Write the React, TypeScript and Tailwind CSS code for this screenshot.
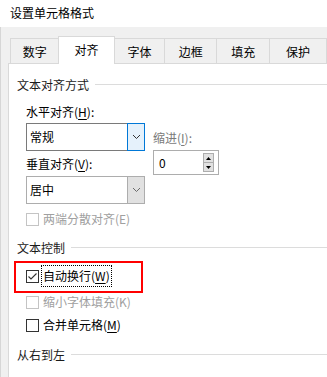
import React from "react";

const FONT = { fontFamily: '"Noto Sans CJK SC", "Noto Sans", sans-serif' };

function Mn({ c }: { c: string }) {
  return (
    <>
      (<span className="underline underline-offset-[2px] decoration-[1px]">{c}</span>)
    </>
  );
}

function Chevron({ color }: { color: string }) {
  return (
    <svg width="9" height="6" viewBox="0 0 9 6">
      <path d="M1 1 L4.5 4.5 L8 1" fill="none" stroke={color} strokeWidth="1" />
    </svg>
  );
}

function GroupHeader({ text }: { text: string }) {
  return (
    <div className="flex items-center h-[20px] pl-[8px] pr-0">
      <span className="leading-[20px] text-[12px] text-[#1a1a1a]">{text}</span>
      <div className="flex-1 h-px bg-[#dcdcdc] ml-[6px] -mt-[1px]" />
    </div>
  );
}

function Box({ checked, disabled }: { checked?: boolean; disabled?: boolean }) {
  return (
    <div
      className={
        "w-[13px] h-[13px] border bg-white flex items-center justify-center shrink-0 " +
        (disabled ? "border-[#c4c4c4]" : "border-[#333333]")
      }
    >
      {checked && (
        <svg width="11" height="11" viewBox="0 0 11 11">
          <path d="M1.5 5.5 L4 8 L9.5 2.5" fill="none" stroke="#333" strokeWidth="1.1" />
        </svg>
      )}
    </div>
  );
}

const tabs = [
  { t: "数字", w: "w-[51px]" },
  { t: "对齐", w: "w-[58px]", active: true },
  { t: "字体", w: "w-[53px]" },
  { t: "边框", w: "w-[55px]" },
  { t: "填充", w: "w-[55px]" },
  { t: "保护", w: "w-[60px]" },
];

export default function App() {
  return (
    <div
      className="relative w-[327px] h-[377px] overflow-hidden bg-[#f0f0f0] text-[12px] text-black flex flex-col"
      style={FONT}
    >
      {/* title bar */}
      <div className="h-[27px] shrink-0 bg-white flex items-center pl-[10px]">
        <span className="leading-[16px] -mt-[1px]">设置单元格格式</span>
      </div>

      <div className="flex-1 flex flex-col border-l border-[#d6d6d6]">
        {/* tabs */}
        <div className="relative z-10 mt-[9px] h-[28px] flex items-end pl-[9px] shrink-0">
          {tabs.map((tab, i) =>
            tab.active ? (
              <div
                key={tab.t}
                className={
                  tab.w +
                  " -ml-px relative z-10 h-[28px] bg-white border-t border-l border-r border-[#d9d9d9] flex items-center justify-center leading-[16px]"
                }
              >
                <span className="-mt-[1px]">{tab.t}</span>
              </div>
            ) : (
              <div
                key={tab.t}
                className={
                  tab.w +
                  (i === 0 ? "" : " -ml-px") +
                  " h-[26px] bg-[#f0f0f0] border border-[#d9d9d9] flex items-center justify-center leading-[16px]"
                }
              >
                <span className="mt-[1px]">{tab.t}</span>
              </div>
            )
          )}
        </div>

        {/* panel */}
        <div className="-mt-px ml-[7px] flex-1 bg-white border-l border-t border-[#d9d9d9] flex flex-col pt-[11px]">
          <GroupHeader text="文本对齐方式" />

          <div className="flex mt-[9px] pl-[17px]">
            <div className="flex flex-col w-[119px]">
              <div className="h-[16px] leading-[16px]">
                水平对齐<Mn c="H" />:
              </div>
              <div className="mt-[3px] h-[28px] flex border border-[#7a7a7a] bg-white">
                <div className="flex-1 flex items-center pl-[3px] leading-[16px]">常规</div>
                <div className="w-[18px] -my-px -mr-px border border-[#0078d7] bg-[#e5f1fb] flex items-center justify-center">
                  <Chevron color="#333333" />
                </div>
              </div>
              <div className="mt-[5px] h-[16px] leading-[16px]">
                垂直对齐<Mn c="V" />:
              </div>
              <div className="mt-[4px] h-[28px] flex border border-[#adadad] bg-white">
                <div className="flex-1 flex items-center pl-[3px] leading-[16px]">居中</div>
                <div className="w-[17px] border-l border-[#adadad] bg-[#e1e1e1] flex items-center justify-center">
                  <Chevron color="#6a6a6a" />
                </div>
              </div>
            </div>

            <div className="flex flex-col ml-[8px]">
              <div className="mt-[26px] h-[16px] leading-[16px] text-[#7a7a7a]">
                缩进<Mn c="I" />:
              </div>
              <div className="mt-[4px] w-[66px] h-[25px] border border-[#adadad] bg-white flex items-center">
                <span className="flex-1 pl-[5px] leading-[16px]">0</span>
                <div className="flex flex-col mr-[4px]">
                  <div className="w-[11px] h-[10px] bg-[#e1e1e1] border border-[#adadad] flex items-center justify-center">
                    <svg width="5" height="3" viewBox="0 0 5 3">
                      <path d="M0 3 L2.5 0 L5 3 Z" fill="#000" />
                    </svg>
                  </div>
                  <div className="w-[11px] h-[10px] -mt-px bg-[#e1e1e1] border border-[#adadad] flex items-center justify-center">
                    <svg width="5" height="3" viewBox="0 0 5 3">
                      <path d="M0 0 L2.5 3 L5 0 Z" fill="#000" />
                    </svg>
                  </div>
                </div>
              </div>
            </div>
          </div>

          <div className="mt-[7px] h-[16px] flex items-center pl-[17px] text-[#a0a0a0]">
            <Box disabled />
            <span className="ml-[4px] leading-[16px]">两端分散对齐(E)</span>
          </div>

          <div className="mt-[11px]">
            <GroupHeader text="文本控制" />
          </div>

          <div className="mt-[7px] h-[22px] flex items-center pl-[17px]">
            <Box checked />
            <span className="ml-[2px] h-[22px] px-[1px] border border-dotted border-black flex items-center leading-[16px]">
              自动换行<Mn c="W" />
            </span>
          </div>

          <div className="mt-[7px] h-[16px] flex items-center pl-[17px] text-[#a0a0a0]">
            <Box disabled />
            <span className="ml-[4px] leading-[16px]">缩小字体填充(K)</span>
          </div>

          <div className="mt-[7px] h-[16px] flex items-center pl-[17px]">
            <Box />
            <span className="ml-[4px] leading-[16px]">
              合并单元格<Mn c="M" />
            </span>
          </div>

          <div className="mt-[12px]">
            <GroupHeader text="从右到左" />
          </div>

          <div className="mt-[10px] h-[16px] pl-[17px] leading-[16px]">
            文字方向<Mn c="T" />:
          </div>
        </div>
      </div>

      {/* red annotation box */}
      <div className="absolute left-[14px] top-[261px] w-[129px] h-[32px] border-2 border-[#ff0000] pointer-events-none" />
    </div>
  );
}
